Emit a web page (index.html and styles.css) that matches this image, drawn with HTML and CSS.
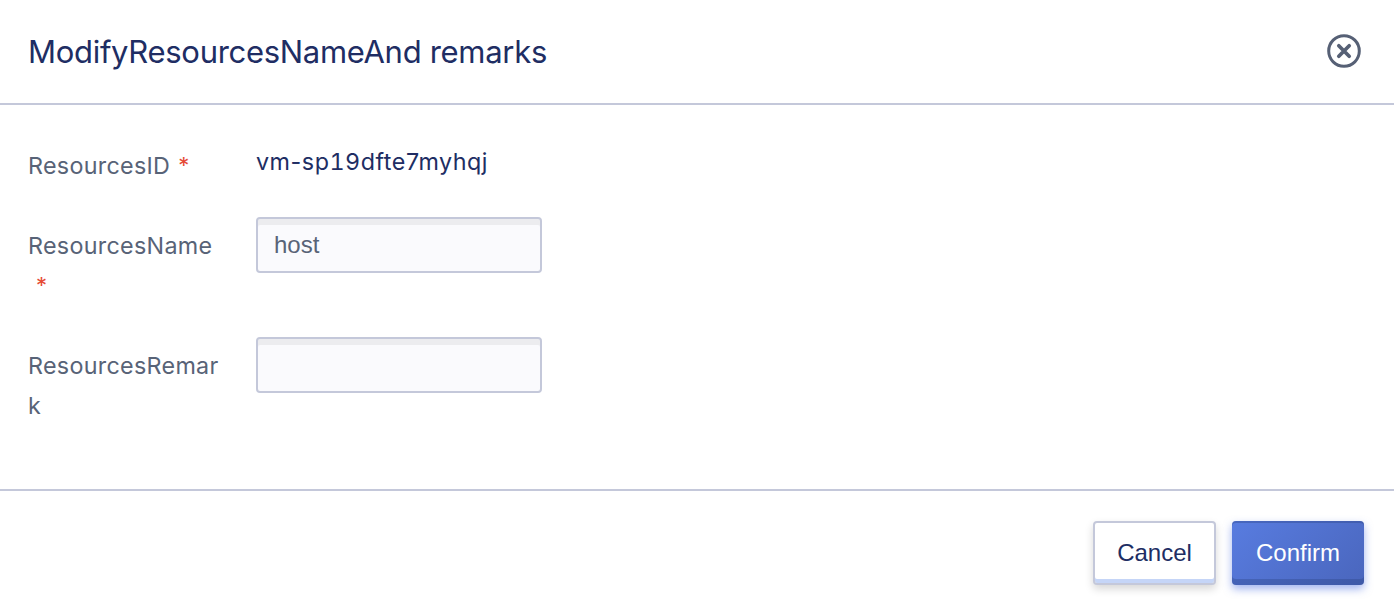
FILE: index.html
```html
<!DOCTYPE html>
<html lang="en">
<head>
<meta charset="utf-8">
<title>Modify resource</title>
<link rel="stylesheet" href="styles.css">
</head>
<body>
<div class="dialog">
  <header class="dialog-header">
    <h1 class="dialog-title">ModifyResourcesNameAnd remarks</h1>
    <svg class="close" width="36" height="36" viewBox="0 0 36 36" fill="none" stroke="#566075">
      <circle cx="18" cy="18" r="15.3" stroke-width="3"/>
      <path d="M12.8 12.8 L23.2 23.2 M23.2 12.8 L12.8 23.2" stroke-width="3.7" stroke-linecap="round"/>
    </svg>
  </header>
  <main class="form">
    <div class="row">
      <div class="label">ResourcesID<span class="required">*</span></div>
      <div class="value">vm-sp<span class="digits">19</span>dfte7myhqj</div>
    </div>
    <div class="row row-name">
      <label class="label" for="name">ResourcesName<wbr><span class="required">*</span></label>
      <input class="input" id="name" type="text" value="host">
    </div>
    <div class="row">
      <label class="label" for="remark">ResourcesRemark</label>
      <input class="input" id="remark" type="text">
    </div>
  </main>
  <footer class="dialog-footer">
    <button class="button cancel" type="button">Cancel</button>
    <button class="button confirm" type="button">Confirm</button>
  </footer>
</div>
</body>
</html>
```

FILE: styles.css
```css
* { box-sizing: border-box; }
body { margin: 0; background: #fff; }
.dialog {
  width: 1394px;
  height: 612px;
  display: flex;
  flex-direction: column;
  overflow: hidden;
  font-family: Inter, sans-serif;
}
.dialog-header {
  height: 105px;
  flex: none;
  display: flex;
  align-items: center;
  justify-content: space-between;
  padding: 0 32px 0 28px;
  border-bottom: 2px solid #c4c8da;
}
.dialog-title {
  margin: 0;
  font-size: 31px;
  font-weight: 400;
  line-height: 48px;
  letter-spacing: -0.3px;
  color: #202d63;
}
.close { flex: none; margin-bottom: 2px; }
.form {
  height: 384px;
  flex: none;
  padding: 32px 28px 0;
}
.row {
  display: flex;
  align-items: flex-start;
  height: 80px;
}
.row-name { height: 120px; }
.label {
  width: 196px;
  margin-right: 32px;
  padding-top: 9px;
  font-size: 23.3px;
  line-height: 40px;
  letter-spacing: 0.3px;
  color: #586377;
  overflow-wrap: anywhere;
}
.required {
  margin-left: 8px;
  font-size: 22px;
  line-height: 1;
  vertical-align: 1px;
  color: #e54a35;
}
.value {
  padding-top: 5px;
  font-size: 23.3px;
  line-height: 40px;
  letter-spacing: 0.53px;
  color: #202d63;
}
.digits { font-variant-numeric: tabular-nums; }
.input {
  width: 286px;
  height: 56px;
  padding: 0 16px;
  border: 2px solid #c4c8da;
  border-radius: 4px;
  background: #fafafd;
  box-shadow: inset 0 6px 0 #ececef;
  font: 24px "Liberation Sans", Arial, sans-serif;
  color: #586377;
  outline: none;
}
.dialog-footer {
  flex: 1;
  display: flex;
  justify-content: flex-end;
  gap: 16px;
  padding: 30px 30px 0;
  border-top: 2px solid #c4c8da;
}
.button {
  height: 64px;
  padding: 0;
  border-radius: 4px;
  font: 24px "Liberation Sans", Arial, sans-serif;
}
.cancel {
  width: 123px;
  border: 2px solid #c4c8da;
  background: #fff;
  color: #202d63;
  box-shadow: inset 0 -4px 0 #c5d5f7, 0 4px 8px rgba(0, 0, 0, 0.16);
}
.confirm {
  width: 132px;
  border: 0;
  background: linear-gradient(135deg, #587ce0, #4a66bd);
  color: #fff;
  box-shadow: inset 0 2px 0 rgba(43, 65, 130, 0.35), inset 0 -6px 0 rgba(43, 65, 130, 0.35), 0 4px 8px rgba(70, 105, 225, 0.5);
}
```
